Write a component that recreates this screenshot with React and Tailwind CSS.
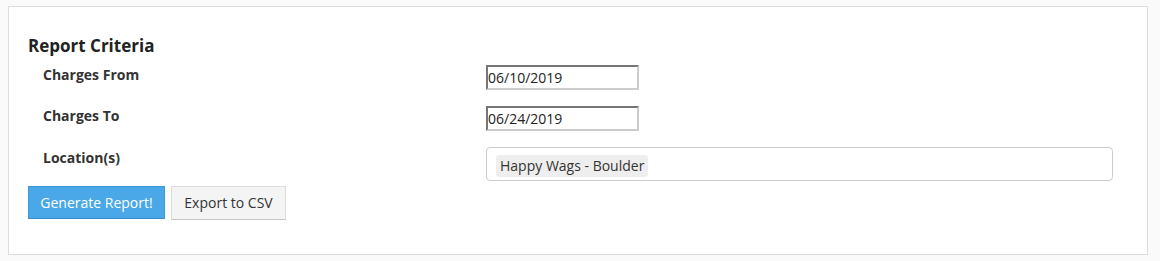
export default function App() {
  const font = { fontFamily: '"Open Sans", "Noto Sans", sans-serif' };
  return (
    <div className="min-h-[261px] bg-[#fafafa] pt-[6px] pl-2" style={font}>
      <div className="w-[1140px] h-[249px] border border-[#dddddd] bg-white pl-[19px] pt-[27px]">
        <h2 className="text-[17px] leading-[23px] font-bold text-[#222]">Report Criteria</h2>
        <div className="mt-[8px] flex flex-col gap-[16px]">
          <div className="flex items-start">
            <div className="w-[458px] pl-[15px] text-[14px] leading-[19px] font-bold text-[#333]">Charges From</div>
            <div className="w-[153px] h-[25px] border-2 border-t-[#767676] border-l-[#767676] border-b-[#cccccc] border-r-[#cccccc] text-[14px] leading-[21px] text-[#222]">06/10/2019</div>
          </div>
          <div className="flex items-start">
            <div className="w-[458px] pl-[15px] text-[14px] leading-[19px] font-bold text-[#333]">Charges To</div>
            <div className="w-[153px] h-[25px] border-2 border-t-[#767676] border-l-[#767676] border-b-[#cccccc] border-r-[#cccccc] text-[14px] leading-[21px] text-[#222]">06/24/2019</div>
          </div>
          <div className="flex items-start">
            <div className="w-[458px] pl-[15px] text-[14px] leading-[19px] font-bold text-[#333] mt-[1px]">Location(s)</div>
            <div className="w-[627px] h-[34px] border border-[#cccccc] rounded-[4px] pl-[9px] pt-[5px]">
              <span className="inline-block h-[22px] px-[4px] bg-[#eeeeee] rounded-[3px] text-[14px] leading-[22px] text-[#333]">Happy Wags - Boulder</span>
            </div>
          </div>
        </div>
        <div className="mt-[5px] flex gap-[6px]">
          <button className="h-[33px] w-[137px] bg-[#4aa8e8] border border-[#3d98d8] border-b-[#3a8bc8] text-white text-[14px] leading-[20px]">Generate Report!</button>
          <button className="h-[34px] w-[115px] bg-[#f4f4f4] border border-[#dddddd] border-b-[#c4c4c4] text-[#333] text-[14px] leading-[20px]">Export to CSV</button>
        </div>
      </div>
    </div>
  );
}
